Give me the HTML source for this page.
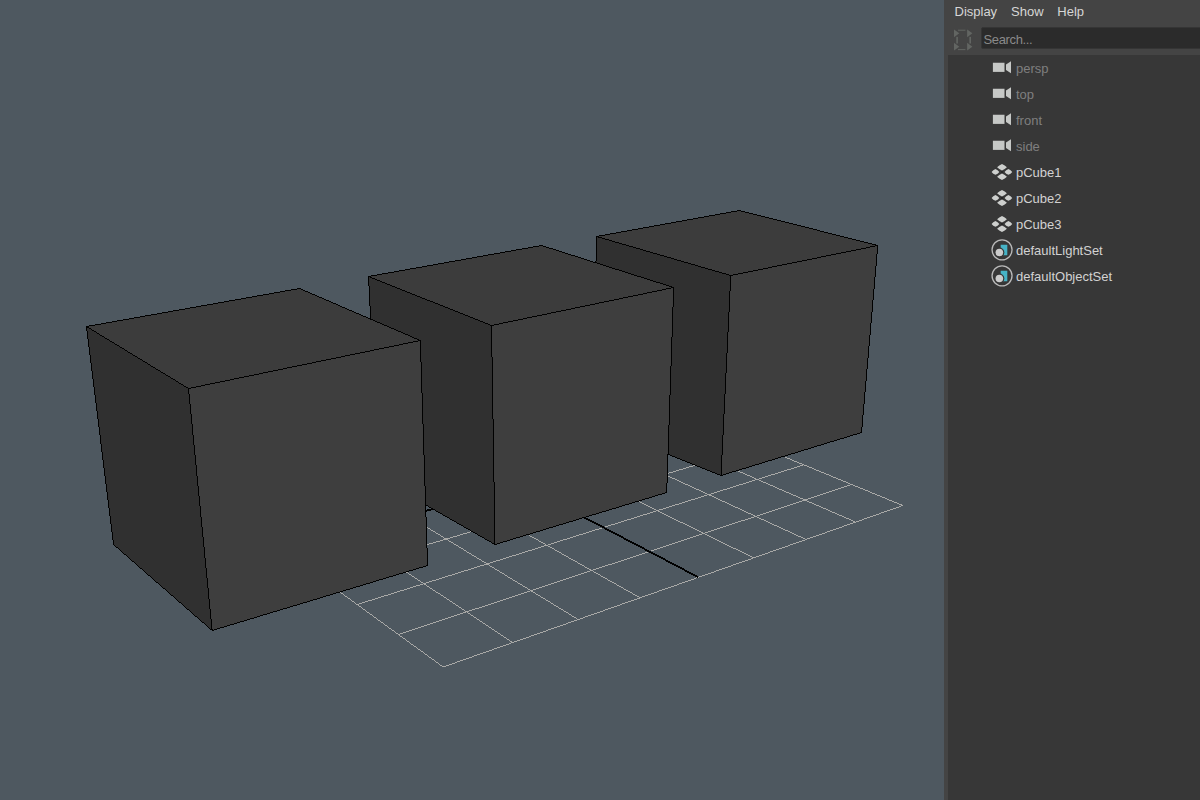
<!DOCTYPE html>
<html><head><meta charset="utf-8"><style>
html,body{margin:0;padding:0;width:1200px;height:800px;overflow:hidden;background:#4e5860;font-family:"Liberation Sans",sans-serif;}
#vp{position:absolute;left:0;top:0;width:944px;height:800px;background:#4e5860;}
#vp svg{position:absolute;left:0;top:0;}
#panel{position:absolute;left:944px;top:0;width:256px;height:800px;background:#444444;}
#list{position:absolute;left:948px;top:55px;width:252px;height:745px;background:#373737;}
.menu{position:absolute;top:3px;font-size:13px;color:#d6d6d6;line-height:18px;}
#search{position:absolute;left:981px;top:27px;width:230px;height:22px;box-sizing:border-box;background:#2b2b2b;border:1px solid #353535;border-radius:2px;}
#stxt{position:absolute;left:983.5px;top:32px;font-size:13px;color:#8a8a8a;line-height:16px;letter-spacing:-0.35px;}
.icon{position:absolute;line-height:0;}
.txt{position:absolute;left:1016px;font-size:13px;line-height:16px;}
</style></head><body>
<div id="vp"><svg width="944" height="800" viewBox="0 0 944 800" shape-rendering="crispEdges">
<path d="M164 464.5h1M165 465.5h1M166 466.5h2M168 467.5h1M169 468.5h2M171 469.5h1M172 470.5h1M173 471.5h2M175 472.5h1M176 473.5h1M177 474.5h2M179 475.5h1M180 476.5h2M182 477.5h1M183 478.5h1M184 479.5h2M186 480.5h1M187 481.5h1M188 482.5h2M190 483.5h1M191 484.5h2M193 485.5h1M194 486.5h1M195 487.5h2M197 488.5h1M198 489.5h1M199 490.5h2M201 491.5h1M202 492.5h2M204 493.5h1M205 494.5h1M206 495.5h2M208 496.5h1M209 497.5h1M210 498.5h2M212 499.5h1M213 500.5h2M215 501.5h1M216 502.5h1M217 503.5h2M219 504.5h1M220 505.5h2M222 506.5h1M223 507.5h1M224 508.5h2M226 509.5h1M227 510.5h1M228 511.5h2M230 512.5h1M231 513.5h2M233 514.5h1M234 515.5h1M235 516.5h2M237 517.5h1M238 518.5h1M239 519.5h2M241 520.5h1M242 521.5h2M244 522.5h1M245 523.5h1M246 524.5h2M248 525.5h1M249 526.5h1M250 527.5h2M252 528.5h1M253 529.5h2M255 530.5h1M256 531.5h1M257 532.5h2M259 533.5h1M260 534.5h1M261 535.5h2M263 536.5h1M264 537.5h2M266 538.5h1M267 539.5h1M268 540.5h2M270 541.5h1M271 542.5h1M272 543.5h2M274 544.5h1M275 545.5h2M277 546.5h1M278 547.5h1M279 548.5h2M281 549.5h1M282 550.5h1M283 551.5h2M285 552.5h1M286 553.5h2M288 554.5h1M289 555.5h1M290 556.5h2M292 557.5h1M293 558.5h1M294 559.5h2M296 560.5h1M297 561.5h2M299 562.5h1M300 563.5h1M301 564.5h2M303 565.5h1M304 566.5h1M305 567.5h2M307 568.5h1M308 569.5h2M310 570.5h1M311 571.5h1M312 572.5h2M314 573.5h1M315 574.5h1M316 575.5h2M318 576.5h1M319 577.5h2M321 578.5h1M322 579.5h1M323 580.5h2M325 581.5h1M326 582.5h2M328 583.5h1M329 584.5h1M330 585.5h2M332 586.5h1M333 587.5h1M334 588.5h2M336 589.5h1M337 590.5h2M339 591.5h1M340 592.5h1M341 593.5h2M343 594.5h1M344 595.5h1M345 596.5h2M347 597.5h1M348 598.5h2M350 599.5h1M351 600.5h1M352 601.5h2M354 602.5h1M355 603.5h1M356 604.5h2M358 605.5h1M359 606.5h2M361 607.5h1M362 608.5h1M363 609.5h2M365 610.5h1M366 611.5h1M367 612.5h2M369 613.5h1M370 614.5h2M372 615.5h1M373 616.5h1M374 617.5h2M376 618.5h1M377 619.5h1M378 620.5h2M380 621.5h1M381 622.5h2M383 623.5h1M384 624.5h1M385 625.5h2M387 626.5h1M388 627.5h1M389 628.5h2M391 629.5h1M392 630.5h2M394 631.5h1M395 632.5h1M396 633.5h2M398 634.5h1M399 635.5h1M400 636.5h2M402 637.5h1M403 638.5h2M405 639.5h1M406 640.5h1M407 641.5h2M409 642.5h1M410 643.5h1M411 644.5h2M413 645.5h1M414 646.5h2M416 647.5h1M417 648.5h1M418 649.5h2M420 650.5h1M421 651.5h2M423 652.5h1M424 653.5h1M425 654.5h2M427 655.5h1M428 656.5h1M429 657.5h2M431 658.5h1M432 659.5h2M434 660.5h1M435 661.5h1M436 662.5h2M438 663.5h1M439 664.5h1M440 665.5h2M442 666.5h1M443 666.5h3M446 665.5h3M449 664.5h3M452 663.5h3M455 662.5h2M457 661.5h3M460 660.5h3M463 659.5h3M466 658.5h3M469 657.5h3M472 656.5h2M474 655.5h3M477 654.5h3M480 653.5h3M483 652.5h3M486 651.5h3M489 650.5h3M492 649.5h2M494 648.5h3M497 647.5h3M500 646.5h3M503 645.5h3M506 644.5h3M509 643.5h2M511 642.5h3M514 641.5h3M517 640.5h3M520 639.5h3M523 638.5h3M526 637.5h3M529 636.5h2M531 635.5h3M534 634.5h3M537 633.5h3M540 632.5h3M543 631.5h3M546 630.5h2M548 629.5h3M551 628.5h3M554 627.5h3M557 626.5h3M560 625.5h3M563 624.5h3M566 623.5h2M568 622.5h3M571 621.5h3M574 620.5h3M577 619.5h3M580 618.5h3M583 617.5h2M585 616.5h3M588 615.5h3M591 614.5h3M594 613.5h3M597 612.5h3M600 611.5h3M603 610.5h2M605 609.5h3M608 608.5h3M611 607.5h3M614 606.5h3M617 605.5h3M620 604.5h2M622 603.5h3M625 602.5h3M628 601.5h3M631 600.5h3M634 599.5h3M637 598.5h3M640 597.5h2M642 596.5h3M645 595.5h3M648 594.5h3M651 593.5h3M654 592.5h3M657 591.5h2M659 590.5h3M662 589.5h3M665 588.5h3M668 587.5h3M671 586.5h3M674 585.5h3M677 584.5h2M679 583.5h3M682 582.5h3M685 581.5h3M688 580.5h3M691 579.5h3M694 578.5h2M696 577.5h3M699 576.5h3M702 575.5h3M705 574.5h3M708 573.5h3M711 572.5h3M714 571.5h2M716 570.5h3M719 569.5h3M722 568.5h3M725 567.5h3M728 566.5h3M731 565.5h2M733 564.5h3M736 563.5h3M739 562.5h3M742 561.5h3M745 560.5h3M748 559.5h3M751 558.5h2M753 557.5h3M756 556.5h3M759 555.5h3M762 554.5h3M765 553.5h3M768 552.5h2M770 551.5h3M773 550.5h3M776 549.5h3M779 548.5h3M782 547.5h3M785 546.5h3M788 545.5h2M790 544.5h3M793 543.5h3M796 542.5h3M799 541.5h3M802 540.5h3M805 539.5h2M807 538.5h3M810 537.5h3M813 536.5h3M816 535.5h3M819 534.5h3M822 533.5h3M825 532.5h2M827 531.5h3M830 530.5h3M833 529.5h3M836 528.5h3M839 527.5h3M842 526.5h2M844 525.5h3M847 524.5h3M850 523.5h3M853 522.5h3M856 521.5h3M859 520.5h3M862 519.5h2M864 518.5h3M867 517.5h3M870 516.5h3M873 515.5h3M876 514.5h3M879 513.5h2M881 512.5h3M884 511.5h3M887 510.5h3M890 509.5h3M893 508.5h3M896 507.5h3M899 506.5h2M901 505.5h2M223 450.5h1M224 451.5h1M225 452.5h2M227 453.5h1M228 454.5h2M230 455.5h1M231 456.5h2M233 457.5h1M234 458.5h2M236 459.5h1M237 460.5h2M239 461.5h1M240 462.5h2M242 463.5h1M243 464.5h2M245 465.5h1M246 466.5h2M248 467.5h1M249 468.5h2M251 469.5h1M252 470.5h2M254 471.5h1M255 472.5h2M257 473.5h1M258 474.5h2M260 475.5h1M261 476.5h2M263 477.5h1M264 478.5h2M266 479.5h1M267 480.5h2M269 481.5h2M271 482.5h1M272 483.5h2M274 484.5h1M275 485.5h2M277 486.5h1M278 487.5h2M280 488.5h1M281 489.5h2M283 490.5h1M284 491.5h2M286 492.5h1M287 493.5h2M289 494.5h1M290 495.5h2M292 496.5h1M293 497.5h2M295 498.5h1M296 499.5h2M298 500.5h1M299 501.5h2M301 502.5h1M302 503.5h2M304 504.5h1M305 505.5h2M307 506.5h1M308 507.5h2M310 508.5h1M311 509.5h2M313 510.5h1M314 511.5h2M316 512.5h1M317 513.5h2M319 514.5h1M320 515.5h2M322 516.5h1M323 517.5h2M325 518.5h1M326 519.5h2M328 520.5h1M329 521.5h2M331 522.5h1M332 523.5h2M334 524.5h1M335 525.5h2M337 526.5h1M338 527.5h2M340 528.5h1M341 529.5h2M343 530.5h1M344 531.5h2M346 532.5h1M347 533.5h2M349 534.5h1M350 535.5h2M352 536.5h2M354 537.5h1M355 538.5h2M357 539.5h1M358 540.5h2M360 541.5h1M361 542.5h2M363 543.5h1M364 544.5h2M366 545.5h1M367 546.5h2M369 547.5h1M370 548.5h2M372 549.5h1M373 550.5h2M375 551.5h1M376 552.5h2M378 553.5h1M379 554.5h2M381 555.5h1M382 556.5h2M384 557.5h1M385 558.5h2M387 559.5h1M388 560.5h2M390 561.5h1M391 562.5h2M393 563.5h1M394 564.5h2M396 565.5h1M397 566.5h2M399 567.5h1M400 568.5h2M402 569.5h1M403 570.5h2M405 571.5h1M406 572.5h2M408 573.5h1M409 574.5h2M411 575.5h1M412 576.5h2M414 577.5h1M415 578.5h2M417 579.5h1M418 580.5h2M420 581.5h1M421 582.5h2M423 583.5h1M424 584.5h2M426 585.5h1M427 586.5h2M429 587.5h1M430 588.5h2M432 589.5h1M433 590.5h2M435 591.5h1M436 592.5h2M438 593.5h2M440 594.5h1M441 595.5h2M443 596.5h1M444 597.5h2M446 598.5h1M447 599.5h2M449 600.5h1M450 601.5h2M452 602.5h1M453 603.5h2M455 604.5h1M456 605.5h2M458 606.5h1M459 607.5h2M461 608.5h1M462 609.5h2M464 610.5h1M465 611.5h2M467 612.5h1M468 613.5h2M470 614.5h1M471 615.5h2M473 616.5h1M474 617.5h2M476 618.5h1M477 619.5h2M479 620.5h1M480 621.5h2M482 622.5h1M483 623.5h2M485 624.5h1M486 625.5h2M488 626.5h1M489 627.5h2M491 628.5h1M492 629.5h2M494 630.5h1M495 631.5h2M497 632.5h1M498 633.5h2M500 634.5h1M501 635.5h2M503 636.5h1M504 637.5h2M506 638.5h1M507 639.5h2M509 640.5h1M510 641.5h2M512 642.5h1M398 634.5h2M400 633.5h3M403 632.5h3M406 631.5h3M409 630.5h3M412 629.5h3M415 628.5h3M418 627.5h3M421 626.5h3M424 625.5h3M427 624.5h3M430 623.5h3M433 622.5h3M436 621.5h3M439 620.5h3M442 619.5h3M445 618.5h3M448 617.5h3M451 616.5h3M454 615.5h3M457 614.5h3M460 613.5h3M463 612.5h3M466 611.5h3M469 610.5h3M472 609.5h3M475 608.5h4M479 607.5h3M482 606.5h3M485 605.5h3M488 604.5h3M491 603.5h3M494 602.5h3M497 601.5h3M500 600.5h3M503 599.5h3M506 598.5h3M509 597.5h3M512 596.5h3M515 595.5h3M518 594.5h3M521 593.5h3M524 592.5h3M527 591.5h3M530 590.5h3M533 589.5h3M536 588.5h3M539 587.5h3M542 586.5h3M545 585.5h3M548 584.5h3M551 583.5h3M554 582.5h3M557 581.5h3M560 580.5h3M563 579.5h3M566 578.5h3M569 577.5h3M572 576.5h3M575 575.5h3M578 574.5h3M581 573.5h3M584 572.5h3M587 571.5h3M590 570.5h3M593 569.5h3M596 568.5h3M599 567.5h3M602 566.5h3M605 565.5h3M608 564.5h4M612 563.5h3M615 562.5h3M618 561.5h3M621 560.5h3M624 559.5h3M627 558.5h3M630 557.5h3M633 556.5h3M636 555.5h3M639 554.5h3M642 553.5h3M645 552.5h3M648 551.5h3M651 550.5h3M654 549.5h3M657 548.5h3M660 547.5h3M663 546.5h3M666 545.5h3M669 544.5h3M672 543.5h3M675 542.5h3M678 541.5h3M681 540.5h3M684 539.5h3M687 538.5h3M690 537.5h3M693 536.5h3M696 535.5h3M699 534.5h3M702 533.5h3M705 532.5h3M708 531.5h3M711 530.5h3M714 529.5h3M717 528.5h3M720 527.5h3M723 526.5h3M726 525.5h3M729 524.5h3M732 523.5h3M735 522.5h3M738 521.5h3M741 520.5h4M745 519.5h3M748 518.5h3M751 517.5h3M754 516.5h3M757 515.5h3M760 514.5h3M763 513.5h3M766 512.5h3M769 511.5h3M772 510.5h3M775 509.5h3M778 508.5h3M781 507.5h3M784 506.5h3M787 505.5h3M790 504.5h3M793 503.5h3M796 502.5h3M799 501.5h3M802 500.5h3M805 499.5h3M808 498.5h3M811 497.5h3M814 496.5h3M817 495.5h3M820 494.5h3M823 493.5h3M826 492.5h3M829 491.5h3M832 490.5h3M835 489.5h3M838 488.5h3M841 487.5h3M844 486.5h3M847 485.5h3M850 484.5h2M279 437.5h1M280 438.5h2M282 439.5h2M284 440.5h1M285 441.5h2M287 442.5h2M289 443.5h1M290 444.5h2M292 445.5h2M294 446.5h1M295 447.5h2M297 448.5h1M298 449.5h2M300 450.5h2M302 451.5h1M303 452.5h2M305 453.5h2M307 454.5h1M308 455.5h2M310 456.5h2M312 457.5h1M313 458.5h2M315 459.5h1M316 460.5h2M318 461.5h2M320 462.5h1M321 463.5h2M323 464.5h2M325 465.5h1M326 466.5h2M328 467.5h2M330 468.5h1M331 469.5h2M333 470.5h2M335 471.5h1M336 472.5h2M338 473.5h1M339 474.5h2M341 475.5h2M343 476.5h1M344 477.5h2M346 478.5h2M348 479.5h1M349 480.5h2M351 481.5h2M353 482.5h1M354 483.5h2M356 484.5h2M358 485.5h1M359 486.5h2M361 487.5h1M362 488.5h2M364 489.5h2M366 490.5h1M367 491.5h2M369 492.5h2M371 493.5h1M372 494.5h2M374 495.5h2M376 496.5h1M377 497.5h2M379 498.5h1M380 499.5h2M382 500.5h2M384 501.5h1M385 502.5h2M387 503.5h2M389 504.5h1M390 505.5h2M392 506.5h2M394 507.5h1M395 508.5h2M397 509.5h2M399 510.5h1M400 511.5h2M402 512.5h1M403 513.5h2M405 514.5h2M407 515.5h1M408 516.5h2M410 517.5h2M412 518.5h1M413 519.5h2M415 520.5h2M417 521.5h1M418 522.5h2M420 523.5h2M422 524.5h1M423 525.5h2M425 526.5h1M426 527.5h2M428 528.5h2M430 529.5h1M431 530.5h2M433 531.5h2M435 532.5h1M436 533.5h2M438 534.5h2M440 535.5h1M441 536.5h2M443 537.5h1M444 538.5h2M446 539.5h2M448 540.5h1M449 541.5h2M451 542.5h2M453 543.5h1M454 544.5h2M456 545.5h2M458 546.5h1M459 547.5h2M461 548.5h2M463 549.5h1M464 550.5h2M466 551.5h1M467 552.5h2M469 553.5h2M471 554.5h1M472 555.5h2M474 556.5h2M476 557.5h1M477 558.5h2M479 559.5h2M481 560.5h1M482 561.5h2M484 562.5h2M486 563.5h1M487 564.5h2M489 565.5h1M490 566.5h2M492 567.5h2M494 568.5h1M495 569.5h2M497 570.5h2M499 571.5h1M500 572.5h2M502 573.5h2M504 574.5h1M505 575.5h2M507 576.5h1M508 577.5h2M510 578.5h2M512 579.5h1M513 580.5h2M515 581.5h2M517 582.5h1M518 583.5h2M520 584.5h2M522 585.5h1M523 586.5h2M525 587.5h2M527 588.5h1M528 589.5h2M530 590.5h1M531 591.5h2M533 592.5h2M535 593.5h1M536 594.5h2M538 595.5h2M540 596.5h1M541 597.5h2M543 598.5h2M545 599.5h1M546 600.5h2M548 601.5h2M550 602.5h1M551 603.5h2M553 604.5h1M554 605.5h2M556 606.5h2M558 607.5h1M559 608.5h2M561 609.5h2M563 610.5h1M564 611.5h2M566 612.5h2M568 613.5h1M569 614.5h2M571 615.5h1M572 616.5h2M574 617.5h2M576 618.5h1M577 619.5h1M357 604.5h2M359 603.5h3M362 602.5h3M365 601.5h3M368 600.5h4M372 599.5h3M375 598.5h3M378 597.5h3M381 596.5h3M384 595.5h4M388 594.5h3M391 593.5h3M394 592.5h3M397 591.5h3M400 590.5h4M404 589.5h3M407 588.5h3M410 587.5h3M413 586.5h3M416 585.5h4M420 584.5h3M423 583.5h3M426 582.5h3M429 581.5h3M432 580.5h4M436 579.5h3M439 578.5h3M442 577.5h3M445 576.5h3M448 575.5h4M452 574.5h3M455 573.5h3M458 572.5h3M461 571.5h3M464 570.5h4M468 569.5h3M471 568.5h3M474 567.5h3M477 566.5h3M480 565.5h4M484 564.5h3M487 563.5h3M490 562.5h3M493 561.5h3M496 560.5h4M500 559.5h3M503 558.5h3M506 557.5h3M509 556.5h3M512 555.5h4M516 554.5h3M519 553.5h3M522 552.5h3M525 551.5h3M528 550.5h4M532 549.5h3M535 548.5h3M538 547.5h3M541 546.5h3M544 545.5h4M548 544.5h3M551 543.5h3M554 542.5h3M557 541.5h3M560 540.5h3M563 539.5h4M567 538.5h3M570 537.5h3M573 536.5h3M576 535.5h3M579 534.5h4M583 533.5h3M586 532.5h3M589 531.5h3M592 530.5h3M595 529.5h4M599 528.5h3M602 527.5h3M605 526.5h3M608 525.5h3M611 524.5h4M615 523.5h3M618 522.5h3M621 521.5h3M624 520.5h3M627 519.5h4M631 518.5h3M634 517.5h3M637 516.5h3M640 515.5h3M643 514.5h4M647 513.5h3M650 512.5h3M653 511.5h3M656 510.5h3M659 509.5h4M663 508.5h3M666 507.5h3M669 506.5h3M672 505.5h3M675 504.5h4M679 503.5h3M682 502.5h3M685 501.5h3M688 500.5h3M691 499.5h4M695 498.5h3M698 497.5h3M701 496.5h3M704 495.5h3M707 494.5h4M711 493.5h3M714 492.5h3M717 491.5h3M720 490.5h3M723 489.5h4M727 488.5h3M730 487.5h3M733 486.5h3M736 485.5h3M739 484.5h4M743 483.5h3M746 482.5h3M749 481.5h3M752 480.5h3M755 479.5h4M759 478.5h3M762 477.5h3M765 476.5h3M768 475.5h3M771 474.5h4M775 473.5h3M778 472.5h3M781 471.5h3M784 470.5h3M787 469.5h4M791 468.5h3M794 467.5h3M797 466.5h3M800 465.5h3M803 464.5h1M333 424.5h1M334 425.5h1M335 426.5h2M337 427.5h2M339 428.5h2M341 429.5h1M342 430.5h2M344 431.5h2M346 432.5h2M348 433.5h2M350 434.5h1M351 435.5h2M353 436.5h2M355 437.5h2M357 438.5h1M358 439.5h2M360 440.5h2M362 441.5h2M364 442.5h2M366 443.5h1M367 444.5h2M369 445.5h2M371 446.5h2M373 447.5h1M374 448.5h2M376 449.5h2M378 450.5h2M380 451.5h1M381 452.5h2M383 453.5h2M385 454.5h2M387 455.5h2M389 456.5h1M390 457.5h2M392 458.5h2M394 459.5h2M396 460.5h1M397 461.5h2M399 462.5h2M401 463.5h2M403 464.5h2M405 465.5h1M406 466.5h2M408 467.5h2M410 468.5h2M412 469.5h1M413 470.5h2M415 471.5h2M417 472.5h2M419 473.5h2M421 474.5h1M422 475.5h2M424 476.5h2M426 477.5h2M428 478.5h1M429 479.5h2M431 480.5h2M433 481.5h2M435 482.5h1M436 483.5h2M438 484.5h2M440 485.5h2M442 486.5h2M444 487.5h1M445 488.5h2M447 489.5h2M449 490.5h2M451 491.5h1M452 492.5h2M454 493.5h2M456 494.5h2M458 495.5h2M460 496.5h1M461 497.5h2M463 498.5h2M465 499.5h2M467 500.5h1M468 501.5h2M470 502.5h2M472 503.5h2M474 504.5h1M475 505.5h2M477 506.5h2M479 507.5h2M481 508.5h2M483 509.5h1M484 510.5h2M486 511.5h2M488 512.5h2M490 513.5h1M491 514.5h2M493 515.5h2M495 516.5h2M497 517.5h2M499 518.5h1M500 519.5h2M502 520.5h2M504 521.5h2M506 522.5h1M507 523.5h2M509 524.5h2M511 525.5h2M513 526.5h1M514 527.5h2M516 528.5h2M518 529.5h2M520 530.5h2M522 531.5h1M523 532.5h2M525 533.5h2M527 534.5h2M529 535.5h1M530 536.5h2M532 537.5h2M534 538.5h2M536 539.5h2M538 540.5h1M539 541.5h2M541 542.5h2M543 543.5h2M545 544.5h1M546 545.5h2M548 546.5h2M550 547.5h2M552 548.5h2M554 549.5h1M555 550.5h2M557 551.5h2M559 552.5h2M561 553.5h1M562 554.5h2M564 555.5h2M566 556.5h2M568 557.5h1M569 558.5h2M571 559.5h2M573 560.5h2M575 561.5h2M577 562.5h1M578 563.5h2M580 564.5h2M582 565.5h2M584 566.5h1M585 567.5h2M587 568.5h2M589 569.5h2M591 570.5h2M593 571.5h1M594 572.5h2M596 573.5h2M598 574.5h2M600 575.5h1M601 576.5h2M603 577.5h2M605 578.5h2M607 579.5h1M608 580.5h2M610 581.5h2M612 582.5h2M614 583.5h2M616 584.5h1M617 585.5h2M619 586.5h2M621 587.5h2M623 588.5h1M624 589.5h2M626 590.5h2M628 591.5h2M630 592.5h2M632 593.5h1M633 594.5h2M635 595.5h2M637 596.5h2M639 597.5h1M319 576.5h2M321 575.5h4M325 574.5h3M328 573.5h4M332 572.5h3M335 571.5h3M338 570.5h4M342 569.5h3M345 568.5h3M348 567.5h4M352 566.5h3M355 565.5h4M359 564.5h3M362 563.5h3M365 562.5h4M369 561.5h3M372 560.5h3M375 559.5h4M379 558.5h3M382 557.5h4M386 556.5h3M389 555.5h3M392 554.5h4M396 553.5h3M399 552.5h3M402 551.5h4M406 550.5h3M409 549.5h4M413 548.5h3M416 547.5h3M419 546.5h4M423 545.5h3M426 544.5h3M429 543.5h4M433 542.5h3M436 541.5h4M440 540.5h3M443 539.5h3M446 538.5h4M450 537.5h3M453 536.5h4M457 535.5h3M460 534.5h3M463 533.5h4M467 532.5h3M470 531.5h3M473 530.5h4M477 529.5h3M480 528.5h4M484 527.5h3M487 526.5h3M490 525.5h4M494 524.5h3M497 523.5h3M500 522.5h4M504 521.5h3M507 520.5h4M511 519.5h3M514 518.5h3M517 517.5h4M521 516.5h3M524 515.5h3M527 514.5h4M531 513.5h3M534 512.5h4M538 511.5h3M541 510.5h3M544 509.5h4M548 508.5h3M551 507.5h3M554 506.5h4M558 505.5h3M561 504.5h4M565 503.5h3M568 502.5h3M571 501.5h4M575 500.5h3M578 499.5h3M581 498.5h4M585 497.5h3M588 496.5h4M592 495.5h3M595 494.5h3M598 493.5h4M602 492.5h3M605 491.5h3M608 490.5h4M612 489.5h3M615 488.5h4M619 487.5h3M622 486.5h3M625 485.5h4M629 484.5h3M632 483.5h3M635 482.5h4M639 481.5h3M642 480.5h4M646 479.5h3M649 478.5h3M652 477.5h4M656 476.5h3M659 475.5h3M662 474.5h4M666 473.5h3M669 472.5h4M673 471.5h3M676 470.5h3M679 469.5h4M683 468.5h3M686 467.5h3M689 466.5h4M693 465.5h3M696 464.5h4M700 463.5h3M703 462.5h3M706 461.5h4M710 460.5h3M713 459.5h3M716 458.5h4M720 457.5h3M723 456.5h4M727 455.5h3M730 454.5h3M733 453.5h4M737 452.5h3M740 451.5h3M743 450.5h4M747 449.5h3M750 448.5h4M754 447.5h3M757 446.5h2M434 401.5h2M436 402.5h2M438 403.5h2M440 404.5h2M442 405.5h2M444 406.5h2M446 407.5h2M448 408.5h2M450 409.5h2M452 410.5h2M454 411.5h2M456 412.5h2M458 413.5h2M460 414.5h2M462 415.5h2M464 416.5h3M467 417.5h2M469 418.5h2M471 419.5h2M473 420.5h2M475 421.5h2M477 422.5h2M479 423.5h2M481 424.5h2M483 425.5h2M485 426.5h2M487 427.5h2M489 428.5h2M491 429.5h2M493 430.5h2M495 431.5h2M497 432.5h2M499 433.5h2M501 434.5h2M503 435.5h2M505 436.5h2M507 437.5h2M509 438.5h2M511 439.5h2M513 440.5h2M515 441.5h2M517 442.5h2M519 443.5h3M522 444.5h2M524 445.5h2M526 446.5h2M528 447.5h2M530 448.5h2M532 449.5h2M534 450.5h2M536 451.5h2M538 452.5h2M540 453.5h2M542 454.5h2M544 455.5h2M546 456.5h2M548 457.5h2M550 458.5h2M552 459.5h2M554 460.5h2M556 461.5h2M558 462.5h2M560 463.5h2M562 464.5h2M564 465.5h2M566 466.5h2M568 467.5h2M570 468.5h2M572 469.5h3M575 470.5h2M577 471.5h2M579 472.5h2M581 473.5h2M583 474.5h2M585 475.5h2M587 476.5h2M589 477.5h2M591 478.5h2M593 479.5h2M595 480.5h2M597 481.5h2M599 482.5h2M601 483.5h2M603 484.5h2M605 485.5h2M607 486.5h2M609 487.5h2M611 488.5h2M613 489.5h2M615 490.5h2M617 491.5h2M619 492.5h2M621 493.5h2M623 494.5h2M625 495.5h3M628 496.5h2M630 497.5h2M632 498.5h2M634 499.5h2M636 500.5h2M638 501.5h2M640 502.5h2M642 503.5h2M644 504.5h2M646 505.5h2M648 506.5h2M650 507.5h2M652 508.5h2M654 509.5h2M656 510.5h2M658 511.5h2M660 512.5h2M662 513.5h2M664 514.5h2M666 515.5h2M668 516.5h2M670 517.5h2M672 518.5h2M674 519.5h2M676 520.5h2M678 521.5h2M680 522.5h3M683 523.5h2M685 524.5h2M687 525.5h2M689 526.5h2M691 527.5h2M693 528.5h2M695 529.5h2M697 530.5h2M699 531.5h2M701 532.5h2M703 533.5h2M705 534.5h2M707 535.5h2M709 536.5h2M711 537.5h2M713 538.5h2M715 539.5h2M717 540.5h2M719 541.5h2M721 542.5h2M723 543.5h2M725 544.5h2M727 545.5h2M729 546.5h2M731 547.5h2M733 548.5h3M736 549.5h2M738 550.5h2M740 551.5h2M742 552.5h2M744 553.5h2M746 554.5h2M748 555.5h2M750 556.5h2M752 557.5h2M250 527.5h1M251 526.5h3M254 525.5h4M258 524.5h4M262 523.5h4M266 522.5h3M269 521.5h4M273 520.5h4M277 519.5h3M280 518.5h4M284 517.5h4M288 516.5h4M292 515.5h3M295 514.5h4M299 513.5h4M303 512.5h4M307 511.5h3M310 510.5h4M314 509.5h4M318 508.5h3M321 507.5h4M325 506.5h4M329 505.5h4M333 504.5h3M336 503.5h4M340 502.5h4M344 501.5h4M348 500.5h3M351 499.5h4M355 498.5h4M359 497.5h3M362 496.5h4M366 495.5h4M370 494.5h4M374 493.5h3M377 492.5h4M381 491.5h4M385 490.5h4M389 489.5h3M392 488.5h4M396 487.5h4M400 486.5h3M403 485.5h4M407 484.5h4M411 483.5h4M415 482.5h3M418 481.5h4M422 480.5h4M426 479.5h4M430 478.5h3M433 477.5h4M437 476.5h4M441 475.5h3M444 474.5h4M448 473.5h4M452 472.5h4M456 471.5h3M459 470.5h4M463 469.5h4M467 468.5h4M471 467.5h3M474 466.5h4M478 465.5h4M482 464.5h4M486 463.5h3M489 462.5h4M493 461.5h4M497 460.5h3M500 459.5h4M504 458.5h4M508 457.5h4M512 456.5h3M515 455.5h4M519 454.5h4M523 453.5h4M527 452.5h3M530 451.5h4M534 450.5h4M538 449.5h3M541 448.5h4M545 447.5h4M549 446.5h4M553 445.5h3M556 444.5h4M560 443.5h4M564 442.5h4M568 441.5h3M571 440.5h4M575 439.5h4M579 438.5h3M582 437.5h4M586 436.5h4M590 435.5h4M594 434.5h3M597 433.5h4M601 432.5h4M605 431.5h4M609 430.5h3M612 429.5h4M616 428.5h4M620 427.5h3M623 426.5h4M627 425.5h4M631 424.5h4M635 423.5h3M638 422.5h4M642 421.5h4M646 420.5h4M650 419.5h3M653 418.5h4M657 417.5h4M661 416.5h3M664 415.5h4M668 414.5h4M672 413.5h4M676 412.5h1M481 390.5h3M484 391.5h2M486 392.5h2M488 393.5h2M490 394.5h2M492 395.5h3M495 396.5h2M497 397.5h2M499 398.5h2M501 399.5h2M503 400.5h2M505 401.5h3M508 402.5h2M510 403.5h2M512 404.5h2M514 405.5h2M516 406.5h2M518 407.5h3M521 408.5h2M523 409.5h2M525 410.5h2M527 411.5h2M529 412.5h2M531 413.5h3M534 414.5h2M536 415.5h2M538 416.5h2M540 417.5h2M542 418.5h2M544 419.5h3M547 420.5h2M549 421.5h2M551 422.5h2M553 423.5h2M555 424.5h2M557 425.5h3M560 426.5h2M562 427.5h2M564 428.5h2M566 429.5h2M568 430.5h2M570 431.5h3M573 432.5h2M575 433.5h2M577 434.5h2M579 435.5h2M581 436.5h2M583 437.5h3M586 438.5h2M588 439.5h2M590 440.5h2M592 441.5h2M594 442.5h3M597 443.5h2M599 444.5h2M601 445.5h2M603 446.5h2M605 447.5h2M607 448.5h3M610 449.5h2M612 450.5h2M614 451.5h2M616 452.5h2M618 453.5h2M620 454.5h3M623 455.5h2M625 456.5h2M627 457.5h2M629 458.5h2M631 459.5h2M633 460.5h3M636 461.5h2M638 462.5h2M640 463.5h2M642 464.5h2M644 465.5h2M646 466.5h3M649 467.5h2M651 468.5h2M653 469.5h2M655 470.5h2M657 471.5h2M659 472.5h3M662 473.5h2M664 474.5h2M666 475.5h2M668 476.5h2M670 477.5h2M672 478.5h3M675 479.5h2M677 480.5h2M679 481.5h2M681 482.5h2M683 483.5h2M685 484.5h3M688 485.5h2M690 486.5h2M692 487.5h2M694 488.5h2M696 489.5h3M699 490.5h2M701 491.5h2M703 492.5h2M705 493.5h2M707 494.5h2M709 495.5h3M712 496.5h2M714 497.5h2M716 498.5h2M718 499.5h2M720 500.5h2M722 501.5h3M725 502.5h2M727 503.5h2M729 504.5h2M731 505.5h2M733 506.5h2M735 507.5h3M738 508.5h2M740 509.5h2M742 510.5h2M744 511.5h2M746 512.5h2M748 513.5h3M751 514.5h2M753 515.5h2M755 516.5h2M757 517.5h2M759 518.5h2M761 519.5h3M764 520.5h2M766 521.5h2M768 522.5h2M770 523.5h2M772 524.5h2M774 525.5h3M777 526.5h2M779 527.5h2M781 528.5h2M783 529.5h2M785 530.5h3M788 531.5h2M790 532.5h2M792 533.5h2M794 534.5h2M796 535.5h2M798 536.5h3M801 537.5h2M803 538.5h2M805 539.5h1M220 504.5h2M222 503.5h4M226 502.5h4M230 501.5h4M234 500.5h4M238 499.5h4M242 498.5h4M246 497.5h4M250 496.5h4M254 495.5h4M258 494.5h3M261 493.5h4M265 492.5h4M269 491.5h4M273 490.5h4M277 489.5h4M281 488.5h4M285 487.5h4M289 486.5h4M293 485.5h4M297 484.5h3M300 483.5h4M304 482.5h4M308 481.5h4M312 480.5h4M316 479.5h4M320 478.5h4M324 477.5h4M328 476.5h4M332 475.5h4M336 474.5h4M340 473.5h3M343 472.5h4M347 471.5h4M351 470.5h4M355 469.5h4M359 468.5h4M363 467.5h4M367 466.5h4M371 465.5h4M375 464.5h4M379 463.5h3M382 462.5h4M386 461.5h4M390 460.5h4M394 459.5h4M398 458.5h4M402 457.5h4M406 456.5h4M410 455.5h4M414 454.5h4M418 453.5h4M422 452.5h3M425 451.5h4M429 450.5h4M433 449.5h4M437 448.5h4M441 447.5h4M445 446.5h4M449 445.5h4M453 444.5h4M457 443.5h4M461 442.5h3M464 441.5h4M468 440.5h4M472 439.5h4M476 438.5h4M480 437.5h4M484 436.5h4M488 435.5h4M492 434.5h4M496 433.5h4M500 432.5h4M504 431.5h3M507 430.5h4M511 429.5h4M515 428.5h4M519 427.5h4M523 426.5h4M527 425.5h4M531 424.5h4M535 423.5h4M539 422.5h4M543 421.5h3M546 420.5h4M550 419.5h4M554 418.5h4M558 417.5h4M562 416.5h4M566 415.5h4M570 414.5h4M574 413.5h4M578 412.5h4M582 411.5h3M585 410.5h4M589 409.5h4M593 408.5h4M597 407.5h4M601 406.5h4M605 405.5h4M609 404.5h4M613 403.5h4M617 402.5h4M621 401.5h4M625 400.5h3M628 399.5h4M632 398.5h4M636 397.5h3M526 379.5h2M528 380.5h3M531 381.5h2M533 382.5h2M535 383.5h3M538 384.5h2M540 385.5h2M542 386.5h3M545 387.5h2M547 388.5h2M549 389.5h3M552 390.5h2M554 391.5h2M556 392.5h2M558 393.5h3M561 394.5h2M563 395.5h2M565 396.5h3M568 397.5h2M570 398.5h2M572 399.5h3M575 400.5h2M577 401.5h2M579 402.5h2M581 403.5h3M584 404.5h2M586 405.5h2M588 406.5h3M591 407.5h2M593 408.5h2M595 409.5h3M598 410.5h2M600 411.5h2M602 412.5h2M604 413.5h3M607 414.5h2M609 415.5h2M611 416.5h3M614 417.5h2M616 418.5h2M618 419.5h3M621 420.5h2M623 421.5h2M625 422.5h3M628 423.5h2M630 424.5h2M632 425.5h2M634 426.5h3M637 427.5h2M639 428.5h2M641 429.5h3M644 430.5h2M646 431.5h2M648 432.5h3M651 433.5h2M653 434.5h2M655 435.5h2M657 436.5h3M660 437.5h2M662 438.5h2M664 439.5h3M667 440.5h2M669 441.5h2M671 442.5h3M674 443.5h2M676 444.5h2M678 445.5h2M680 446.5h3M683 447.5h2M685 448.5h2M687 449.5h3M690 450.5h2M692 451.5h2M694 452.5h3M697 453.5h2M699 454.5h2M701 455.5h2M703 456.5h3M706 457.5h2M708 458.5h2M710 459.5h3M713 460.5h2M715 461.5h2M717 462.5h3M720 463.5h2M722 464.5h2M724 465.5h3M727 466.5h2M729 467.5h2M731 468.5h2M733 469.5h3M736 470.5h2M738 471.5h2M740 472.5h3M743 473.5h2M745 474.5h2M747 475.5h3M750 476.5h2M752 477.5h2M754 478.5h2M756 479.5h3M759 480.5h2M761 481.5h2M763 482.5h3M766 483.5h2M768 484.5h2M770 485.5h3M773 486.5h2M775 487.5h2M777 488.5h2M779 489.5h3M782 490.5h2M784 491.5h2M786 492.5h3M789 493.5h2M791 494.5h2M793 495.5h3M796 496.5h2M798 497.5h2M800 498.5h3M803 499.5h2M805 500.5h2M807 501.5h2M809 502.5h3M812 503.5h2M814 504.5h2M816 505.5h3M819 506.5h2M821 507.5h2M823 508.5h3M826 509.5h2M828 510.5h2M830 511.5h2M832 512.5h3M835 513.5h2M837 514.5h2M839 515.5h3M842 516.5h2M844 517.5h2M846 518.5h3M849 519.5h2M851 520.5h2M853 521.5h2M855 522.5h1M191 483.5h3M194 482.5h4M198 481.5h4M202 480.5h4M206 479.5h4M210 478.5h5M215 477.5h4M219 476.5h4M223 475.5h4M227 474.5h4M231 473.5h4M235 472.5h4M239 471.5h4M243 470.5h4M247 469.5h4M251 468.5h4M255 467.5h4M259 466.5h4M263 465.5h5M268 464.5h4M272 463.5h4M276 462.5h4M280 461.5h4M284 460.5h4M288 459.5h4M292 458.5h4M296 457.5h4M300 456.5h4M304 455.5h4M308 454.5h4M312 453.5h5M317 452.5h4M321 451.5h4M325 450.5h4M329 449.5h4M333 448.5h4M337 447.5h4M341 446.5h4M345 445.5h4M349 444.5h4M353 443.5h4M357 442.5h4M361 441.5h5M366 440.5h4M370 439.5h4M374 438.5h4M378 437.5h4M382 436.5h4M386 435.5h4M390 434.5h4M394 433.5h4M398 432.5h4M402 431.5h4M406 430.5h4M410 429.5h4M414 428.5h5M419 427.5h4M423 426.5h4M427 425.5h4M431 424.5h4M435 423.5h4M439 422.5h4M443 421.5h4M447 420.5h4M451 419.5h4M455 418.5h4M459 417.5h4M463 416.5h5M468 415.5h4M472 414.5h4M476 413.5h4M480 412.5h4M484 411.5h4M488 410.5h4M492 409.5h4M496 408.5h4M500 407.5h4M504 406.5h4M508 405.5h4M512 404.5h4M516 403.5h5M521 402.5h4M525 401.5h4M529 400.5h4M533 399.5h4M537 398.5h4M541 397.5h4M545 396.5h4M549 395.5h4M553 394.5h4M557 393.5h4M561 392.5h4M565 391.5h5M570 390.5h4M574 389.5h4M578 388.5h4M582 387.5h4M586 386.5h4M590 385.5h4M594 384.5h4M598 383.5h4M602 382.5h2M570 369.5h3M573 370.5h2M575 371.5h3M578 372.5h2M580 373.5h3M583 374.5h2M585 375.5h2M587 376.5h3M590 377.5h2M592 378.5h3M595 379.5h2M597 380.5h3M600 381.5h2M602 382.5h3M605 383.5h2M607 384.5h2M609 385.5h3M612 386.5h2M614 387.5h3M617 388.5h2M619 389.5h3M622 390.5h2M624 391.5h2M626 392.5h3M629 393.5h2M631 394.5h3M634 395.5h2M636 396.5h3M639 397.5h2M641 398.5h2M643 399.5h3M646 400.5h2M648 401.5h3M651 402.5h2M653 403.5h3M656 404.5h2M658 405.5h3M661 406.5h2M663 407.5h2M665 408.5h3M668 409.5h2M670 410.5h3M673 411.5h2M675 412.5h3M678 413.5h2M680 414.5h2M682 415.5h3M685 416.5h2M687 417.5h3M690 418.5h2M692 419.5h3M695 420.5h2M697 421.5h2M699 422.5h3M702 423.5h2M704 424.5h3M707 425.5h2M709 426.5h3M712 427.5h2M714 428.5h3M717 429.5h2M719 430.5h2M721 431.5h3M724 432.5h2M726 433.5h3M729 434.5h2M731 435.5h3M734 436.5h2M736 437.5h2M738 438.5h3M741 439.5h2M743 440.5h3M746 441.5h2M748 442.5h3M751 443.5h2M753 444.5h3M756 445.5h2M758 446.5h2M760 447.5h3M763 448.5h2M765 449.5h3M768 450.5h2M770 451.5h3M773 452.5h2M775 453.5h2M777 454.5h3M780 455.5h2M782 456.5h3M785 457.5h2M787 458.5h3M790 459.5h2M792 460.5h2M794 461.5h3M797 462.5h2M799 463.5h3M802 464.5h2M804 465.5h3M807 466.5h2M809 467.5h3M812 468.5h2M814 469.5h2M816 470.5h3M819 471.5h2M821 472.5h3M824 473.5h2M826 474.5h3M829 475.5h2M831 476.5h2M833 477.5h3M836 478.5h2M838 479.5h3M841 480.5h2M843 481.5h3M846 482.5h2M848 483.5h2M850 484.5h3M853 485.5h2M855 486.5h3M858 487.5h2M860 488.5h3M863 489.5h2M865 490.5h3M868 491.5h2M870 492.5h2M872 493.5h3M875 494.5h2M877 495.5h3M880 496.5h2M882 497.5h3M885 498.5h2M887 499.5h2M889 500.5h3M892 501.5h2M894 502.5h3M897 503.5h2M899 504.5h3M902 505.5h1M164 464.5h1M165 463.5h4M169 462.5h4M173 461.5h5M178 460.5h4M182 459.5h4M186 458.5h4M190 457.5h5M195 456.5h4M199 455.5h4M203 454.5h4M207 453.5h5M212 452.5h4M216 451.5h4M220 450.5h4M224 449.5h5M229 448.5h4M233 447.5h4M237 446.5h4M241 445.5h5M246 444.5h4M250 443.5h4M254 442.5h4M258 441.5h5M263 440.5h4M267 439.5h4M271 438.5h4M275 437.5h5M280 436.5h4M284 435.5h4M288 434.5h5M293 433.5h4M297 432.5h4M301 431.5h4M305 430.5h5M310 429.5h4M314 428.5h4M318 427.5h4M322 426.5h5M327 425.5h4M331 424.5h4M335 423.5h4M339 422.5h5M344 421.5h4M348 420.5h4M352 419.5h4M356 418.5h5M361 417.5h4M365 416.5h4M369 415.5h4M373 414.5h5M378 413.5h4M382 412.5h4M386 411.5h4M390 410.5h5M395 409.5h4M399 408.5h4M403 407.5h4M407 406.5h5M412 405.5h4M416 404.5h4M420 403.5h4M424 402.5h5M429 401.5h4M433 400.5h4M437 399.5h4M441 398.5h5M446 397.5h4M450 396.5h4M454 395.5h5M459 394.5h4M463 393.5h4M467 392.5h4M471 391.5h5M476 390.5h4M480 389.5h4M484 388.5h4M488 387.5h5M493 386.5h4M497 385.5h4M501 384.5h4M505 383.5h5M510 382.5h4M514 381.5h4M518 380.5h4M522 379.5h5M527 378.5h4M531 377.5h4M535 376.5h4M539 375.5h5M544 374.5h4M548 373.5h4M552 372.5h4M556 371.5h5M561 370.5h4M565 369.5h4M569 368.5h1" stroke="#a9a9a7" fill="none"/>
<path d="M384 413h2M386 414h2M388 415h2M390 416h2M392 417h2M394 418h2M396 419h2M398 420h2M400 421h2M402 422h1M403 423h2M405 424h2M407 425h2M409 426h2M411 427h2M413 428h2M415 429h2M417 430h2M419 431h2M421 432h1M422 433h2M424 434h2M426 435h2M428 436h2M430 437h2M432 438h2M434 439h2M436 440h2M438 441h2M440 442h2M442 443h1M443 444h2M445 445h2M447 446h2M449 447h2M451 448h2M453 449h2M455 450h2M457 451h2M459 452h2M461 453h2M463 454h1M464 455h2M466 456h2M468 457h2M470 458h2M472 459h2M474 460h2M476 461h2M478 462h2M480 463h2M482 464h1M483 465h2M485 466h2M487 467h2M489 468h2M491 469h2M493 470h2M495 471h2M497 472h2M499 473h2M501 474h2M503 475h1M504 476h2M506 477h2M508 478h2M510 479h2M512 480h2M514 481h2M516 482h2M518 483h2M520 484h2M522 485h1M523 486h2M525 487h2M527 488h2M529 489h2M531 490h2M533 491h2M535 492h2M537 493h2M539 494h2M541 495h2M543 496h1M544 497h2M546 498h2M548 499h2M550 500h2M552 501h2M554 502h2M556 503h2M558 504h2M560 505h2M562 506h2M564 507h1M565 508h2M567 509h2M569 510h2M571 511h2M573 512h2M575 513h2M577 514h2M579 515h2M581 516h2M583 517h1M584 518h2M586 519h2M588 520h2M590 521h2M592 522h2M594 523h2M596 524h2M598 525h2M600 526h2M602 527h2M604 528h1M605 529h2M607 530h2M609 531h2M611 532h2M613 533h2M615 534h2M617 535h2M619 536h2M621 537h2M623 538h1M624 539h2M626 540h2M628 541h2M630 542h2M632 543h2M634 544h2M636 545h2M638 546h2M640 547h2M642 548h2M644 549h1M645 550h2M647 551h2M649 552h2M651 553h2M653 554h2M655 555h2M657 556h2M659 557h2M661 558h2M663 559h2M665 560h1M666 561h2M668 562h2M670 563h2M672 564h2M674 565h2M676 566h2M678 567h2M680 568h2M682 569h2M684 570h1M685 571h2M687 572h2M689 573h2M691 574h2M693 575h2M695 576h2M697 577h1M283 551h2M285 550h4M289 549h3M292 548h4M296 547h3M299 546h4M303 545h4M307 544h3M310 543h4M314 542h3M317 541h4M321 540h3M324 539h4M328 538h3M331 537h4M335 536h4M339 535h3M342 534h4M346 533h3M349 532h4M353 531h3M356 530h4M360 529h3M363 528h4M367 527h4M371 526h3M374 525h4M378 524h3M381 523h4M385 522h3M388 521h4M392 520h3M395 519h4M399 518h3M402 517h4M406 516h4M410 515h3M413 514h4M417 513h3M420 512h4M424 511h3M427 510h4M431 509h3M434 508h4M438 507h4M442 506h3M445 505h4M449 504h3M452 503h4M456 502h3M459 501h4M463 500h3M466 499h4M470 498h4M474 497h3M477 496h4M481 495h3M484 494h4M488 493h3M491 492h4M495 491h3M498 490h4M502 489h3M505 488h4M509 487h4M513 486h3M516 485h4M520 484h3M523 483h4M527 482h3M530 481h4M534 480h3M537 479h4M541 478h4M545 477h3M548 476h4M552 475h3M555 474h4M559 473h3M562 472h4M566 471h3M569 470h4M573 469h4M577 468h3M580 467h4M584 466h3M587 465h4M591 464h3M594 463h4M598 462h3M601 461h4M605 460h3M608 459h4M612 458h4M616 457h3M619 456h4M623 455h3M626 454h4M630 453h3M633 452h4M637 451h3M640 450h4M644 449h4M648 448h3M651 447h4M655 446h3M658 445h4M662 444h3M665 443h4M669 442h3M672 441h4M676 440h4M680 439h3M683 438h4M687 437h3M690 436h4M694 435h3M697 434h4M701 433h3M704 432h4M708 431h3M711 430h4M715 429h2" stroke="#000" stroke-width="2" fill="none"/>
<polygon points="596.50,236.50 739.50,210.50 877.78,245.50 730.76,275.50" fill="#3c3c3c"/>
<polygon points="596.50,236.50 730.76,275.50 721.00,475.50 592.70,424.00" fill="#303030"/>
<polygon points="730.76,275.50 877.78,245.50 861.48,432.50 721.00,475.50" fill="#3e3e3e"/>
<path d="M596 236.5h3M599 235.5h6M605 234.5h5M610 233.5h6M616 232.5h5M621 231.5h6M627 230.5h5M632 229.5h6M638 228.5h5M643 227.5h6M649 226.5h5M654 225.5h6M660 224.5h5M665 223.5h6M671 222.5h5M676 221.5h6M682 220.5h5M687 219.5h6M693 218.5h5M698 217.5h6M704 216.5h5M709 215.5h6M715 214.5h5M720 213.5h6M726 212.5h5M731 211.5h6M737 210.5h3M739 210.5h2M741 211.5h4M745 212.5h4M749 213.5h4M753 214.5h4M757 215.5h4M761 216.5h4M765 217.5h4M769 218.5h4M773 219.5h4M777 220.5h4M781 221.5h4M785 222.5h4M789 223.5h4M793 224.5h4M797 225.5h4M801 226.5h4M805 227.5h4M809 228.5h4M813 229.5h4M817 230.5h3M820 231.5h4M824 232.5h4M828 233.5h4M832 234.5h4M836 235.5h4M840 236.5h4M844 237.5h4M848 238.5h4M852 239.5h4M856 240.5h4M860 241.5h4M864 242.5h4M868 243.5h4M872 244.5h4M876 245.5h2M731 275.5h2M733 274.5h5M738 273.5h5M743 272.5h5M748 271.5h5M753 270.5h5M758 269.5h5M763 268.5h5M768 267.5h4M772 266.5h5M777 265.5h5M782 264.5h5M787 263.5h5M792 262.5h5M797 261.5h5M802 260.5h5M807 259.5h5M812 258.5h5M817 257.5h4M821 256.5h5M826 255.5h5M831 254.5h5M836 253.5h5M841 252.5h5M846 251.5h5M851 250.5h5M856 249.5h5M861 248.5h5M866 247.5h4M870 246.5h5M875 245.5h3M596 236.5h2M598 237.5h4M602 238.5h3M605 239.5h4M609 240.5h3M612 241.5h3M615 242.5h4M619 243.5h3M622 244.5h4M626 245.5h3M629 246.5h4M633 247.5h3M636 248.5h4M640 249.5h3M643 250.5h3M646 251.5h4M650 252.5h3M653 253.5h4M657 254.5h3M660 255.5h4M664 256.5h3M667 257.5h4M671 258.5h3M674 259.5h3M677 260.5h4M681 261.5h3M684 262.5h4M688 263.5h3M691 264.5h4M695 265.5h3M698 266.5h3M701 267.5h4M705 268.5h3M708 269.5h4M712 270.5h3M715 271.5h4M719 272.5h3M722 273.5h4M726 274.5h3M729 275.5h2M596.5 236v25M595.5 261v50M594.5 311v49M593.5 360v49M592.5 409v15M593 424.5h2M595 425.5h3M598 426.5h2M600 427.5h3M603 428.5h2M605 429.5h3M608 430.5h2M610 431.5h3M613 432.5h2M615 433.5h3M618 434.5h2M620 435.5h3M623 436.5h2M625 437.5h3M628 438.5h2M630 439.5h3M633 440.5h2M635 441.5h3M638 442.5h2M640 443.5h3M643 444.5h2M645 445.5h3M648 446.5h2M650 447.5h2M652 448.5h3M655 449.5h2M657 450.5h3M660 451.5h2M662 452.5h3M665 453.5h2M667 454.5h3M670 455.5h2M672 456.5h3M675 457.5h2M677 458.5h3M680 459.5h2M682 460.5h3M685 461.5h2M687 462.5h3M690 463.5h2M692 464.5h3M695 465.5h2M697 466.5h3M700 467.5h2M702 468.5h3M705 469.5h2M707 470.5h3M710 471.5h2M712 472.5h3M715 473.5h2M717 474.5h3M720 475.5h1M730.5 275v16M729.5 291v21M728.5 312v20M727.5 332v21M726.5 353v20M725.5 373v21M724.5 394v20M723.5 414v21M722.5 435v20M721.5 455v21M877.5 245v9M876.5 254v12M875.5 266v11M874.5 277v12M873.5 289v11M872.5 300v12M871.5 312v11M870.5 323v12M869.5 335v11M868.5 346v12M867.5 358v11M866.5 369v12M865.5 381v11M864.5 392v12M863.5 404v11M862.5 415v12M861.5 427v6M721 475.5h2M723 474.5h3M726 473.5h3M729 472.5h3M732 471.5h4M736 470.5h3M739 469.5h3M742 468.5h4M746 467.5h3M749 466.5h3M752 465.5h3M755 464.5h4M759 463.5h3M762 462.5h3M765 461.5h3M768 460.5h4M772 459.5h3M775 458.5h3M778 457.5h3M781 456.5h4M785 455.5h3M788 454.5h3M791 453.5h4M795 452.5h3M798 451.5h3M801 450.5h3M804 449.5h4M808 448.5h3M811 447.5h3M814 446.5h3M817 445.5h4M821 444.5h3M824 443.5h3M827 442.5h3M830 441.5h4M834 440.5h3M837 439.5h3M840 438.5h4M844 437.5h3M847 436.5h3M850 435.5h3M853 434.5h4M857 433.5h3M860 432.5h1" stroke="#000000" fill="none"/>
<polygon points="368.50,276.50 541.50,245.50 673.68,287.50 491.50,325.50" fill="#3c3c3c"/>
<polygon points="368.50,276.50 491.50,325.50 495.00,544.50 378.60,478.00" fill="#303030"/>
<polygon points="491.50,325.50 673.68,287.50 666.68,492.50 495.00,544.50" fill="#3e3e3e"/>
<path d="M368 276.5h3M371 275.5h6M377 274.5h5M382 273.5h6M388 272.5h6M394 271.5h5M399 270.5h6M405 269.5h5M410 268.5h6M416 267.5h6M422 266.5h5M427 265.5h6M433 264.5h5M438 263.5h6M444 262.5h5M449 261.5h6M455 260.5h6M461 259.5h5M466 258.5h6M472 257.5h5M477 256.5h6M483 255.5h5M488 254.5h6M494 253.5h6M500 252.5h5M505 251.5h6M511 250.5h5M516 249.5h6M522 248.5h6M528 247.5h5M533 246.5h6M539 245.5h3M541 245.5h2M543 246.5h3M546 247.5h3M549 248.5h4M553 249.5h3M556 250.5h3M559 251.5h3M562 252.5h3M565 253.5h3M568 254.5h3M571 255.5h4M575 256.5h3M578 257.5h3M581 258.5h3M584 259.5h3M587 260.5h3M590 261.5h3M593 262.5h4M597 263.5h3M600 264.5h3M603 265.5h3M606 266.5h3M609 267.5h3M612 268.5h3M615 269.5h4M619 270.5h3M622 271.5h3M625 272.5h3M628 273.5h3M631 274.5h3M634 275.5h3M637 276.5h4M641 277.5h3M644 278.5h3M647 279.5h3M650 280.5h3M653 281.5h3M656 282.5h4M660 283.5h3M663 284.5h3M666 285.5h3M669 286.5h3M672 287.5h2M491 325.5h3M494 324.5h5M499 323.5h4M503 322.5h5M508 321.5h5M513 320.5h5M518 319.5h5M523 318.5h4M527 317.5h5M532 316.5h5M537 315.5h5M542 314.5h5M547 313.5h4M551 312.5h5M556 311.5h5M561 310.5h5M566 309.5h5M571 308.5h4M575 307.5h5M580 306.5h5M585 305.5h5M590 304.5h5M595 303.5h4M599 302.5h5M604 301.5h5M609 300.5h5M614 299.5h5M619 298.5h4M623 297.5h5M628 296.5h5M633 295.5h5M638 294.5h5M643 293.5h4M647 292.5h5M652 291.5h5M657 290.5h5M662 289.5h4M666 288.5h5M671 287.5h3M368 276.5h2M370 277.5h2M372 278.5h3M375 279.5h2M377 280.5h3M380 281.5h2M382 282.5h3M385 283.5h2M387 284.5h3M390 285.5h2M392 286.5h3M395 287.5h2M397 288.5h3M400 289.5h2M402 290.5h3M405 291.5h2M407 292.5h3M410 293.5h2M412 294.5h3M415 295.5h2M417 296.5h3M420 297.5h2M422 298.5h3M425 299.5h2M427 300.5h3M430 301.5h3M433 302.5h2M435 303.5h3M438 304.5h2M440 305.5h3M443 306.5h2M445 307.5h3M448 308.5h2M450 309.5h3M453 310.5h2M455 311.5h3M458 312.5h2M460 313.5h3M463 314.5h2M465 315.5h3M468 316.5h2M470 317.5h3M473 318.5h2M475 319.5h3M478 320.5h2M480 321.5h3M483 322.5h2M485 323.5h3M488 324.5h2M490 325.5h2M368.5 276v10M369.5 286v20M370.5 306v20M371.5 326v20M372.5 346v20M373.5 366v20M374.5 386v20M375.5 406v20M376.5 426v20M377.5 446v20M378.5 466v12M379 478.5h1M380 479.5h2M382 480.5h2M384 481.5h2M386 482.5h1M387 483.5h2M389 484.5h2M391 485.5h2M393 486.5h1M394 487.5h2M396 488.5h2M398 489.5h2M400 490.5h1M401 491.5h2M403 492.5h2M405 493.5h2M407 494.5h1M408 495.5h2M410 496.5h2M412 497.5h2M414 498.5h1M415 499.5h2M417 500.5h2M419 501.5h2M421 502.5h1M422 503.5h2M424 504.5h2M426 505.5h2M428 506.5h1M429 507.5h2M431 508.5h2M433 509.5h2M435 510.5h1M436 511.5h2M438 512.5h2M440 513.5h2M442 514.5h1M443 515.5h2M445 516.5h2M447 517.5h2M449 518.5h1M450 519.5h2M452 520.5h2M454 521.5h2M456 522.5h1M457 523.5h2M459 524.5h2M461 525.5h2M463 526.5h1M464 527.5h2M466 528.5h2M468 529.5h2M470 530.5h1M471 531.5h2M473 532.5h2M475 533.5h2M477 534.5h1M478 535.5h2M480 536.5h2M482 537.5h2M484 538.5h1M485 539.5h2M487 540.5h2M489 541.5h2M491 542.5h1M492 543.5h2M494 544.5h1M491.5 325v32M492.5 357v62M493.5 419v63M494.5 482v62M495.5 544v1M673.5 287v20M672.5 307v30M671.5 337v29M670.5 366v29M669.5 395v30M668.5 425v29M667.5 454v29M666.5 483v10M495 544.5h2M497 543.5h3M500 542.5h3M503 541.5h4M507 540.5h3M510 539.5h3M513 538.5h3M516 537.5h4M520 536.5h3M523 535.5h3M526 534.5h4M530 533.5h3M533 532.5h3M536 531.5h4M540 530.5h3M543 529.5h3M546 528.5h3M549 527.5h4M553 526.5h3M556 525.5h3M559 524.5h4M563 523.5h3M566 522.5h3M569 521.5h4M573 520.5h3M576 519.5h3M579 518.5h3M582 517.5h4M586 516.5h3M589 515.5h3M592 514.5h4M596 513.5h3M599 512.5h3M602 511.5h4M606 510.5h3M609 509.5h3M612 508.5h4M616 507.5h3M619 506.5h3M622 505.5h3M625 504.5h4M629 503.5h3M632 502.5h3M635 501.5h4M639 500.5h3M642 499.5h3M645 498.5h4M649 497.5h3M652 496.5h3M655 495.5h3M658 494.5h4M662 493.5h3M665 492.5h2" stroke="#000000" fill="none"/>
<polygon points="86.50,326.50 299.50,288.50 420.30,340.50 188.50,388.50" fill="#3c3c3c"/>
<polygon points="86.50,326.50 188.50,388.50 212.10,630.50 113.50,544.50" fill="#303030"/>
<polygon points="188.50,388.50 420.30,340.50 427.55,565.50 212.10,630.50" fill="#3e3e3e"/>
<path d="M86 326.5h3M89 325.5h6M95 324.5h6M101 323.5h5M106 322.5h6M112 321.5h5M117 320.5h6M123 319.5h6M129 318.5h5M134 317.5h6M140 316.5h5M145 315.5h6M151 314.5h6M157 313.5h5M162 312.5h6M168 311.5h5M173 310.5h6M179 309.5h6M185 308.5h5M190 307.5h6M196 306.5h5M201 305.5h6M207 304.5h6M213 303.5h5M218 302.5h6M224 301.5h5M229 300.5h6M235 299.5h6M241 298.5h5M246 297.5h6M252 296.5h5M257 295.5h6M263 294.5h6M269 293.5h5M274 292.5h6M280 291.5h5M285 290.5h6M291 289.5h6M297 288.5h3M299 288.5h2M301 289.5h2M303 290.5h2M305 291.5h3M308 292.5h2M310 293.5h2M312 294.5h3M315 295.5h2M317 296.5h2M319 297.5h3M322 298.5h2M324 299.5h2M326 300.5h3M329 301.5h2M331 302.5h2M333 303.5h3M336 304.5h2M338 305.5h2M340 306.5h2M342 307.5h3M345 308.5h2M347 309.5h2M349 310.5h3M352 311.5h2M354 312.5h2M356 313.5h3M359 314.5h2M361 315.5h2M363 316.5h3M366 317.5h2M368 318.5h2M370 319.5h3M373 320.5h2M375 321.5h2M377 322.5h3M380 323.5h2M382 324.5h2M384 325.5h3M387 326.5h2M389 327.5h2M391 328.5h3M394 329.5h2M396 330.5h2M398 331.5h3M401 332.5h2M403 333.5h2M405 334.5h3M408 335.5h2M410 336.5h2M412 337.5h2M414 338.5h3M417 339.5h2M419 340.5h1M188 388.5h3M191 387.5h5M196 386.5h5M201 385.5h4M205 384.5h5M210 383.5h5M215 382.5h5M220 381.5h5M225 380.5h5M230 379.5h4M234 378.5h5M239 377.5h5M244 376.5h5M249 375.5h5M254 374.5h5M259 373.5h4M263 372.5h5M268 371.5h5M273 370.5h5M278 369.5h5M283 368.5h4M287 367.5h5M292 366.5h5M297 365.5h5M302 364.5h5M307 363.5h5M312 362.5h4M316 361.5h5M321 360.5h5M326 359.5h5M331 358.5h5M336 357.5h5M341 356.5h4M345 355.5h5M350 354.5h5M355 353.5h5M360 352.5h5M365 351.5h5M370 350.5h4M374 349.5h5M379 348.5h5M384 347.5h5M389 346.5h5M394 345.5h5M399 344.5h4M403 343.5h5M408 342.5h5M413 341.5h5M418 340.5h2M86 326.5h1M87 327.5h2M89 328.5h2M91 329.5h1M92 330.5h2M94 331.5h2M96 332.5h1M97 333.5h2M99 334.5h1M100 335.5h2M102 336.5h2M104 337.5h1M105 338.5h2M107 339.5h2M109 340.5h1M110 341.5h2M112 342.5h2M114 343.5h1M115 344.5h2M117 345.5h2M119 346.5h1M120 347.5h2M122 348.5h2M124 349.5h1M125 350.5h2M127 351.5h1M128 352.5h2M130 353.5h2M132 354.5h1M133 355.5h2M135 356.5h2M137 357.5h1M138 358.5h2M140 359.5h2M142 360.5h1M143 361.5h2M145 362.5h2M147 363.5h1M148 364.5h2M150 365.5h1M151 366.5h2M153 367.5h2M155 368.5h1M156 369.5h2M158 370.5h2M160 371.5h1M161 372.5h2M163 373.5h2M165 374.5h1M166 375.5h2M168 376.5h2M170 377.5h1M171 378.5h2M173 379.5h2M175 380.5h1M176 381.5h2M178 382.5h1M179 383.5h2M181 384.5h2M183 385.5h1M184 386.5h2M186 387.5h2M188 388.5h1M86.5 326v5M87.5 331v8M88.5 339v8M89.5 347v8M90.5 355v8M91.5 363v8M92.5 371v8M93.5 379v8M94.5 387v8M95.5 395v8M96.5 403v8M97.5 411v8M98.5 419v8M99.5 427v8M100.5 435v9M101.5 444v8M102.5 452v8M103.5 460v8M104.5 468v8M105.5 476v8M106.5 484v8M107.5 492v8M108.5 500v8M109.5 508v8M110.5 516v8M111.5 524v8M112.5 532v8M113.5 540v5M113 544.5h1M114 545.5h1M115 546.5h1M116 547.5h2M118 548.5h1M119 549.5h1M120 550.5h1M121 551.5h1M122 552.5h1M123 553.5h1M124 554.5h2M126 555.5h1M127 556.5h1M128 557.5h1M129 558.5h1M130 559.5h1M131 560.5h1M132 561.5h2M134 562.5h1M135 563.5h1M136 564.5h1M137 565.5h1M138 566.5h1M139 567.5h1M140 568.5h2M142 569.5h1M143 570.5h1M144 571.5h1M145 572.5h1M146 573.5h1M147 574.5h1M148 575.5h2M150 576.5h1M151 577.5h1M152 578.5h1M153 579.5h1M154 580.5h1M155 581.5h1M156 582.5h2M158 583.5h1M159 584.5h1M160 585.5h1M161 586.5h1M162 587.5h1M163 588.5h2M165 589.5h1M166 590.5h1M167 591.5h1M168 592.5h1M169 593.5h1M170 594.5h1M171 595.5h2M173 596.5h1M174 597.5h1M175 598.5h1M176 599.5h1M177 600.5h1M178 601.5h1M179 602.5h2M181 603.5h1M182 604.5h1M183 605.5h1M184 606.5h1M185 607.5h1M186 608.5h1M187 609.5h2M189 610.5h1M190 611.5h1M191 612.5h1M192 613.5h1M193 614.5h1M194 615.5h1M195 616.5h2M197 617.5h1M198 618.5h1M199 619.5h1M200 620.5h1M201 621.5h1M202 622.5h2M204 623.5h1M205 624.5h1M206 625.5h1M207 626.5h1M208 627.5h1M209 628.5h1M210 629.5h2M188.5 388v6M189.5 394v10M190.5 404v10M191.5 414v10M192.5 424v11M193.5 435v10M194.5 445v10M195.5 455v10M196.5 465v11M197.5 476v10M198.5 486v10M199.5 496v10M200.5 506v11M201.5 517v10M202.5 527v10M203.5 537v10M204.5 547v11M205.5 558v10M206.5 568v10M207.5 578v10M208.5 588v11M209.5 599v10M210.5 609v10M211.5 619v10M212.5 629v2M420.5 340v22M421.5 362v31M422.5 393v31M423.5 424v31M424.5 455v31M425.5 486v31M426.5 517v31M427.5 548v18M212 630.5h2M214 629.5h3M217 628.5h3M220 627.5h4M224 626.5h3M227 625.5h3M230 624.5h4M234 623.5h3M237 622.5h3M240 621.5h4M244 620.5h3M247 619.5h3M250 618.5h4M254 617.5h3M257 616.5h3M260 615.5h3M263 614.5h4M267 613.5h3M270 612.5h3M273 611.5h4M277 610.5h3M280 609.5h3M283 608.5h4M287 607.5h3M290 606.5h3M293 605.5h4M297 604.5h3M300 603.5h3M303 602.5h4M307 601.5h3M310 600.5h3M313 599.5h4M317 598.5h3M320 597.5h3M323 596.5h3M326 595.5h4M330 594.5h3M333 593.5h3M336 592.5h4M340 591.5h3M343 590.5h3M346 589.5h4M350 588.5h3M353 587.5h3M356 586.5h4M360 585.5h3M363 584.5h3M366 583.5h4M370 582.5h3M373 581.5h3M376 580.5h3M379 579.5h4M383 578.5h3M386 577.5h3M389 576.5h4M393 575.5h3M396 574.5h3M399 573.5h4M403 572.5h3M406 571.5h3M409 570.5h4M413 569.5h3M416 568.5h3M419 567.5h4M423 566.5h3M426 565.5h2" stroke="#000000" fill="none"/>
</svg></div>
<div id="panel"></div>
<div id="list"></div>
<div class="menu" style="left:954.5px">Display</div>
<div class="menu" style="left:1011px">Show</div>
<div class="menu" style="left:1057.3px">Help</div>
<div class="icon" style="left:950px;top:26px"><svg width="28" height="28" viewBox="0 0 28 28"><g fill="#626562"><polygon points="4,3.5 9.3,7.35 4,11.2"/><polygon points="17.15,3.5 22.4,7.35 17.15,11.2"/><polygon points="4,16.8 9.3,20.65 4,24.5"/><polygon points="17.15,16.8 22.4,20.65 17.15,24.5"/><rect x="8" y="3.7" width="7.4" height="1"/><rect x="8" y="23.1" width="7.4" height="1"/><rect x="6.3" y="10.85" width="1.6" height="6.65"/><rect x="19.4" y="10.85" width="1.6" height="6.65"/></g></svg></div>
<div id="search"></div>
<div id="stxt">Search...</div>
<div class="icon" style="left:990px;top:56px"><svg width="24" height="24" viewBox="0 0 24 24"><rect x="2.9" y="6.75" width="11.6" height="9.15" fill="#c6c8c6"/><polygon points="16,8.5 21,5.25 21,17.25 16,14" fill="#c6c8c6"/></svg></div><div class="txt" style="top:61px;color:#7f7f7f">persp</div>
<div class="icon" style="left:990px;top:82px"><svg width="24" height="24" viewBox="0 0 24 24"><rect x="2.9" y="6.75" width="11.6" height="9.15" fill="#c6c8c6"/><polygon points="16,8.5 21,5.25 21,17.25 16,14" fill="#c6c8c6"/></svg></div><div class="txt" style="top:87px;color:#7f7f7f">top</div>
<div class="icon" style="left:990px;top:108px"><svg width="24" height="24" viewBox="0 0 24 24"><rect x="2.9" y="6.75" width="11.6" height="9.15" fill="#c6c8c6"/><polygon points="16,8.5 21,5.25 21,17.25 16,14" fill="#c6c8c6"/></svg></div><div class="txt" style="top:113px;color:#7f7f7f">front</div>
<div class="icon" style="left:990px;top:134px"><svg width="24" height="24" viewBox="0 0 24 24"><rect x="2.9" y="6.75" width="11.6" height="9.15" fill="#c6c8c6"/><polygon points="16,8.5 21,5.25 21,17.25 16,14" fill="#c6c8c6"/></svg></div><div class="txt" style="top:139px;color:#7f7f7f">side</div>
<div class="icon" style="left:990px;top:160px"><svg width="24" height="24" viewBox="0 0 24 24"><path d="M12.00,4.10Q15.04,5.32 16.90,7.30Q15.04,9.28 12.00,10.50Q8.96,9.28 7.10,7.30Q8.96,5.32 12.00,4.10ZM5.45,9.05Q7.84,10.15 9.30,11.95Q7.84,13.75 5.45,14.85Q3.06,13.75 1.60,11.95Q3.06,10.15 5.45,9.05ZM18.40,9.05Q20.79,10.15 22.25,11.95Q20.79,13.75 18.40,14.85Q16.01,13.75 14.55,11.95Q16.01,10.15 18.40,9.05ZM12.00,13.40Q15.04,14.63 16.90,16.65Q15.04,18.66 12.00,19.90Q8.96,18.66 7.10,16.65Q8.96,14.63 12.00,13.40Z" fill="#cdcfcd"/><circle cx="12" cy="12" r="1.1" fill="#222"/></svg></div><div class="txt" style="top:165px;color:#d2d2d2">pCube1</div>
<div class="icon" style="left:990px;top:186px"><svg width="24" height="24" viewBox="0 0 24 24"><path d="M12.00,4.10Q15.04,5.32 16.90,7.30Q15.04,9.28 12.00,10.50Q8.96,9.28 7.10,7.30Q8.96,5.32 12.00,4.10ZM5.45,9.05Q7.84,10.15 9.30,11.95Q7.84,13.75 5.45,14.85Q3.06,13.75 1.60,11.95Q3.06,10.15 5.45,9.05ZM18.40,9.05Q20.79,10.15 22.25,11.95Q20.79,13.75 18.40,14.85Q16.01,13.75 14.55,11.95Q16.01,10.15 18.40,9.05ZM12.00,13.40Q15.04,14.63 16.90,16.65Q15.04,18.66 12.00,19.90Q8.96,18.66 7.10,16.65Q8.96,14.63 12.00,13.40Z" fill="#cdcfcd"/><circle cx="12" cy="12" r="1.1" fill="#222"/></svg></div><div class="txt" style="top:191px;color:#d2d2d2">pCube2</div>
<div class="icon" style="left:990px;top:212px"><svg width="24" height="24" viewBox="0 0 24 24"><path d="M12.00,4.10Q15.04,5.32 16.90,7.30Q15.04,9.28 12.00,10.50Q8.96,9.28 7.10,7.30Q8.96,5.32 12.00,4.10ZM5.45,9.05Q7.84,10.15 9.30,11.95Q7.84,13.75 5.45,14.85Q3.06,13.75 1.60,11.95Q3.06,10.15 5.45,9.05ZM18.40,9.05Q20.79,10.15 22.25,11.95Q20.79,13.75 18.40,14.85Q16.01,13.75 14.55,11.95Q16.01,10.15 18.40,9.05ZM12.00,13.40Q15.04,14.63 16.90,16.65Q15.04,18.66 12.00,19.90Q8.96,18.66 7.10,16.65Q8.96,14.63 12.00,13.40Z" fill="#cdcfcd"/><circle cx="12" cy="12" r="1.1" fill="#222"/></svg></div><div class="txt" style="top:217px;color:#d2d2d2">pCube3</div>
<div class="icon" style="left:990px;top:238px"><svg width="24" height="24" viewBox="0 0 24 24"><circle cx="12.05" cy="11.85" r="10" fill="none" stroke="#b9b9b9" stroke-width="1.3"/><rect x="10.7" y="6.75" width="6.6" height="10.5" fill="#46b3c6"/><circle cx="9.35" cy="14.46" r="5" fill="#373737"/><circle cx="9.35" cy="14.46" r="3.8" fill="#cbcbcb"/></svg></div><div class="txt" style="top:243px;color:#d2d2d2">defaultLightSet</div>
<div class="icon" style="left:990px;top:264px"><svg width="24" height="24" viewBox="0 0 24 24"><circle cx="12.05" cy="11.85" r="10" fill="none" stroke="#b9b9b9" stroke-width="1.3"/><rect x="10.7" y="6.75" width="6.6" height="10.5" fill="#46b3c6"/><circle cx="9.35" cy="14.46" r="5" fill="#373737"/><circle cx="9.35" cy="14.46" r="3.8" fill="#cbcbcb"/></svg></div><div class="txt" style="top:269px;color:#d2d2d2">defaultObjectSet</div>
</body></html>
